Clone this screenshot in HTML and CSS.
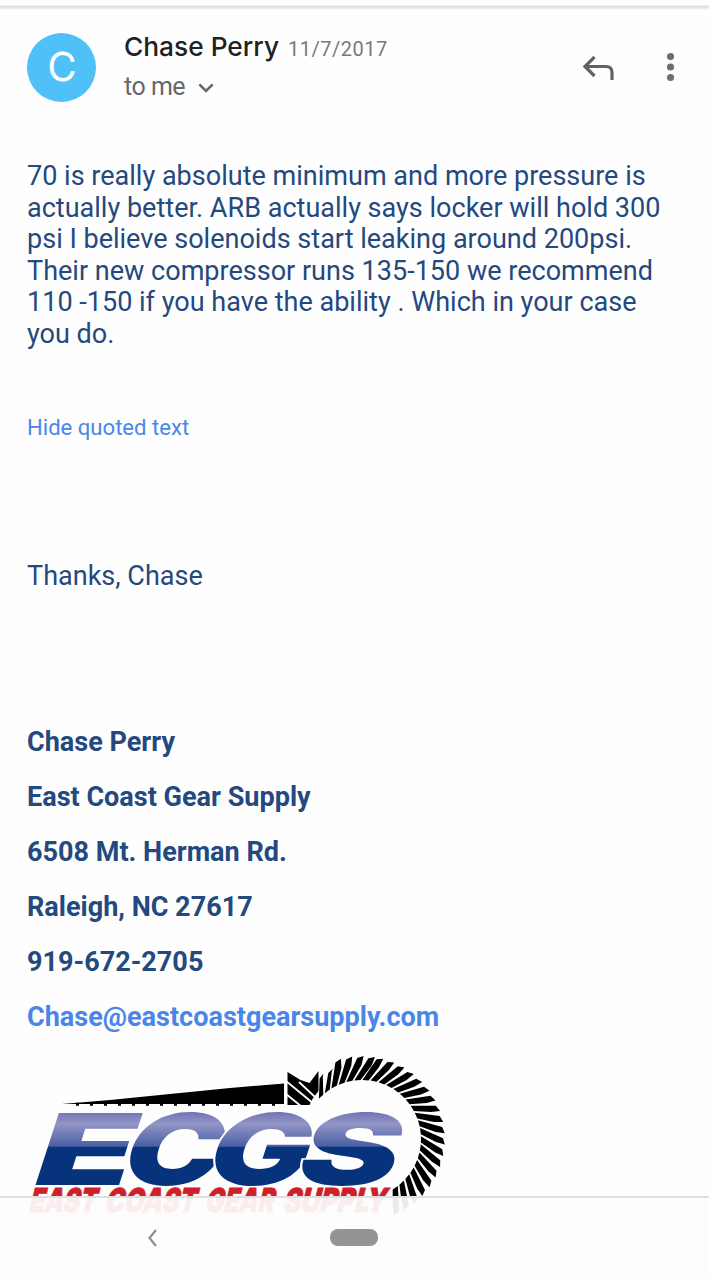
FILE: index.html
```html
<!DOCTYPE html>
<html lang="en">
<head>
  <meta charset="UTF-8" />
  <meta name="viewport" content="width=device-width, initial-scale=1" />
  <title>Chase Perry</title>
  <link rel="stylesheet" href="styles.css">
</head>
<body>
  <div class="top-edge"></div>
  <header class="mail-header">
    <div class="avatar">
      <svg width="69" height="69" viewBox="0 0 69 69"><text x="35" y="48" text-anchor="middle">C</text></svg>
    </div>
    <div class="sender">
      <div class="sender-line">
        <span class="name">Chase Perry</span>
        <span class="date">11/7/2017</span>
      </div>
      <div class="recipient">
        <span>to me</span>
        <svg width="16" height="10" viewBox="0 0 16 10"><path d="M1.3 1.3 8 8l6.7-6.7" /></svg>
      </div>
    </div>
    <div class="actions">
      <svg class="reply" width="34" height="28" viewBox="0 0 34 28"><path d="M12.5 3 3 12.5l9.500 9.500M3.500 12.500H24q6 0 6 6V26" /></svg>
      <svg class="more" width="8" height="30" viewBox="0 0 8 30"><circle cx="3.500" cy="4.500" r="3.600" /><circle cx="3.500" cy="15" r="3.600" /><circle cx="3.500" cy="25.500" r="3.600" /></svg>
    </div>
  </header>

  <main class="mail-body">
    <p class="message">
      70 is really absolute minimum and more pressure is<br>
      actually better. ARB actually says locker will hold 300<br>
      psi I believe solenoids start leaking around 200psi.<br>
      Their new compressor runs 135-150 we recommend<br>
      110 -150 if you have the ability . Which in your case<br>
      you do.
    </p>
    <a class="quoted">Hide quoted text</a>
    <p class="thanks">Thanks, Chase</p>
    <div class="signature">
      <p>Chase Perry</p>
      <p>East Coast Gear Supply</p>
      <p>6508 Mt. Herman Rd.</p>
      <p>Raleigh, NC 27617</p>
      <p>919-672-2705</p>
      <p><a>Chase@eastcoastgearsupply.com</a></p>
    </div>
    <svg class="logo" width="430" height="165" viewBox="20 1050 430 165">
      <defs>
        <linearGradient id="blue" gradientUnits="userSpaceOnUse" x1="0" y1="-72" x2="0" y2="0">
          <stop offset="0" stop-color="#7376b4" />
          <stop offset="0.15" stop-color="#9295c6" />
          <stop offset="0.46" stop-color="#4a5fa3" />
          <stop offset="0.48" stop-color="#07327c" />
          <stop offset="1" stop-color="#07327c" />
        </linearGradient>
      </defs>
      <!-- pinion shaft -->
      <path d="M62 1103 110 1099 180 1092 230 1087 284 1082.500V1103Z" />
      <path class="shaft-dots" d="M76 1103.200H284" />
      <path d="M287.500 1071l13 8 9 3 9-12v20l-6 8-3 6H287.500Z" />
      <path class="gaps" d="M286 1080l28 23M286 1093l16 13M299 1081l16 15" />
      <g id="teeth"></g>
      <g class="ecgs" transform="translate(34 1184) skewX(-18)">
        <text x="-6" y="0" textLength="98" lengthAdjust="spacingAndGlyphs">E</text>
        <text x="82" y="0" textLength="98" lengthAdjust="spacingAndGlyphs">C</text>
        <text x="167" y="0" textLength="101" lengthAdjust="spacingAndGlyphs">G</text>
        <text x="257" y="0" textLength="100" lengthAdjust="spacingAndGlyphs">S</text>
      </g>
      <g class="tagline" transform="translate(28 1211) skewX(-14)">
        <text x="0" y="0" textLength="67" lengthAdjust="spacingAndGlyphs">EAST</text>
        <text x="76" y="0" textLength="91" lengthAdjust="spacingAndGlyphs">COAST</text>
        <text x="176" y="0" textLength="69" lengthAdjust="spacingAndGlyphs">GEAR</text>
        <text x="254" y="0" textLength="103" lengthAdjust="spacingAndGlyphs">SUPPLY</text>
      </g>
    </svg>
  </main>

  <nav class="nav-bar">
    <svg class="back" width="14" height="20" viewBox="0 0 14 20"><path d="M11 2 4.500 10 11 18" /></svg>
    <div class="home"></div>
  </nav>

  <script>
    // ring gear teeth, swept clockwise
    const teeth = document.getElementById('teeth');
    const cx = 362, cy = 1138;
    const point = (r, deg) => {
      const a = deg * Math.PI / 180;
      return (cx + r * Math.cos(a)).toFixed(1) + ' ' + (cy + r * Math.sin(a)).toFixed(1);
    };
    let d = '';
    for (let deg = -137; deg <= 54; deg += 7.9) {
      const r = deg < -125 ? 74 : 81;
      // more sweep near the pinion, less towards the bottom
      const s = deg < -90 ? 13 : 11;
      d += `M${point(59, deg)}L${point(r, deg + s - 1)}L${point(r + 2, deg + s + 3.5)}L${point(74, deg + s + 2)}L${point(59, deg + 6)}Z`;
    }
    const path = document.createElementNS('http://www.w3.org/2000/svg', 'path');
    path.setAttribute('d', d);
    teeth.appendChild(path);
  </script>
</body>
</html>
```
FILE: styles.css
```css
* {
  box-sizing: border-box;
}
body {
  margin: 0;
  height: 1279px;
  overflow: hidden;
  position: relative;
  background-color: #fefefe;
  color: #23497f;
  font-family: Roboto, sans-serif;
}
p {
  margin: 0;
}
.top-edge {
  height: 10px;
  background: linear-gradient(#fefefe 5px, #e0e0e0 6px, #e6e6e6 8px, #fefefe 10px);
}
.mail-header {
  display: flex;
  height: 104px;
  padding: 23px 34px 0 27px;
}
.avatar {
  width: 69px;
  height: 69px;
  border-radius: 50%;
  background-color: #4fc1f8;
}
.avatar text {
  font-family: Inter, sans-serif;
  font-weight: 300;
  font-size: 39px;
  fill: #fff;
  stroke: #fff;
  stroke-width: 1;
}
.sender {
  margin-left: 28px;
  flex: 1;
}
.sender-line {
  display: flex;
  align-items: baseline;
  height: 39px;
  line-height: 28px;
  white-space: nowrap;
}
.name {
  width: 164px;
  font-family: Inter, sans-serif;
  font-weight: 500;
  font-size: 26.3px;
  color: #202124;
}
.date {
  font-size: 20px;
  color: #77797c;
  letter-spacing: 0.5px;
}
.recipient {
  display: flex;
  align-items: center;
  gap: 13px;
  font-size: 25px;
  letter-spacing: -0.5px;
  line-height: 30px;
  color: #65686c;
}
.recipient svg, .actions svg, .back {
  fill: none;
  stroke: #65686c;
  stroke-width: 2.6;
}
.recipient svg {
  margin-top: 2px;
}
.actions {
  display: flex;
  align-items: flex-start;
  gap: 51px;
  padding-top: 19px;
}
.actions .reply {
  margin-top: 2px;
  stroke: #5f6368;
  stroke-width: 3.2;
}
.actions .more {
  fill: #6d6e70;
  stroke: none;
}
.mail-body {
  display: flex;
  flex-direction: column;
  align-items: flex-start;
  padding: 47px 27px 0;
  font-size: 27.04px;
  line-height: 31.5px;
  white-space: nowrap;
}
.quoted {
  margin-top: 63px;
  font-size: 22.1px;
  line-height: 28px;
  color: #4a86e8;
}
.thanks {
  margin-top: 120px;
}
.signature {
  margin-top: 122px;
  font-weight: 700;
  line-height: 55px;
}
.signature a {
  color: #4a86e8;
}
.logo {
  display: block;
  margin: 6px 0 0 -7px;
}
.shaft-dots {
  stroke: #000;
  stroke-width: 3;
  stroke-dasharray: 3 11;
}
.gaps {
  stroke: #fefefe;
  stroke-width: 1.8;
}
.ecgs text {
  font-family: Inter, sans-serif;
  font-weight: 900;
  font-size: 99px;
  fill: url(#blue);
  stroke: #fefefe;
  stroke-width: 3;
  paint-order: stroke;
}
.tagline text {
  font-family: Inter, sans-serif;
  font-weight: 900;
  font-size: 33px;
  fill: #cf1f2a;
  stroke: #cf1f2a;
  stroke-width: 0.8;
}
.nav-bar {
  position: absolute;
  left: 0;
  right: 0;
  bottom: 0;
  height: 83px;
  padding: 0 0 2px 145px;
  display: flex;
  align-items: center;
  border-top: 2px solid #dfdfdf;
  background-color: rgba(253, 253, 253, 0.93);
}
.back {
  stroke: #8e8e8e;
  stroke-width: 2.2;
}
.home {
  width: 48px;
  height: 17px;
  margin-left: 171px;
  border-radius: 8px;
  background-color: #949494;
}
```
